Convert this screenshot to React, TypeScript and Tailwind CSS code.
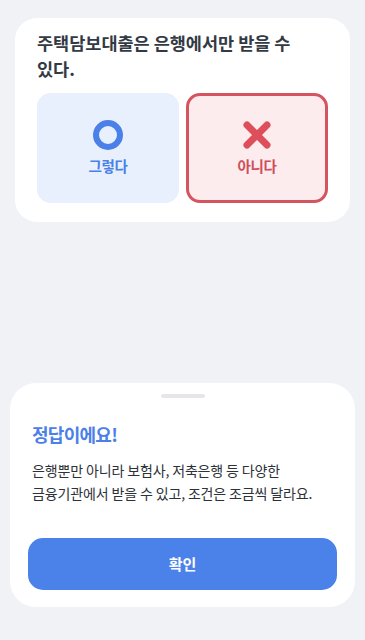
import { useState } from "react";

const font = { fontFamily: '"Noto Sans CJK KR", "Noto Sans", sans-serif' };

function CircleMark() {
  return (
    <svg width="30" height="30" viewBox="0 0 30 30" fill="none">
      <circle cx="15" cy="15" r="12" stroke="#4a80e8" strokeWidth="6" />
    </svg>
  );
}

function CrossMark() {
  return (
    <svg width="30" height="30" viewBox="0 0 30 30" fill="none">
      <path d="M5 5 L25 25 M25 5 L5 25" stroke="#dc4f5b" strokeWidth="7" strokeLinecap="round" />
    </svg>
  );
}

export default function App() {
  const [picked] = useState<"yes" | "no">("no");

  return (
    <div style={font} className="flex h-[640px] flex-col bg-[#f0f2f5] pt-[18px] pb-[33px]">
      {/* quiz card */}
      <div className="mx-[15px] rounded-[22px] bg-white px-[22px] pt-[12px] pb-[19px]">
        <p className="break-keep text-[17.5px] font-bold leading-[26px] text-[#333a44]">
          주택담보대출은 은행에서만 받을 수 있다.
        </p>
        <div className="mt-[11px] grid grid-cols-2 gap-[7px]">
          <button
            className={
              picked === "yes"
                ? "flex h-[110px] flex-col items-center justify-center gap-[6px] rounded-[14px] border-[3px] border-[#4a80e8] bg-[#e8f0fd]"
                : "flex h-[110px] flex-col items-center justify-center gap-[6px] rounded-[14px] bg-[#e8f0fd]"
            }
          >
            <CircleMark />
            <span className="text-[14.5px] font-bold leading-[20px] tracking-[-0.02em] text-[#4a80e8]">그렇다</span>
          </button>
          <button
            className={
              picked === "no"
                ? "flex h-[110px] flex-col items-center justify-center gap-[6px] rounded-[14px] border-[3px] border-[#d4545f] bg-[#fdecee]"
                : "flex h-[110px] flex-col items-center justify-center gap-[6px] rounded-[14px] bg-[#fdecee]"
            }
          >
            <CrossMark />
            <span className="text-[14.5px] font-bold leading-[20px] tracking-[-0.02em] text-[#cf4f5b]">아니다</span>
          </button>
        </div>
      </div>

      {/* result sheet */}
      <div className="mx-[10px] mt-auto rounded-[26px] bg-white px-[18px] pt-[11px] pb-[17px]">
        <div className="mx-auto h-[4px] w-[44px] rounded-full bg-[#e4e6ea]" />
        <h2 className="mt-[24px] px-[4px] text-[18px] font-bold leading-[24px] tracking-[-0.04em] text-[#4a80e8]">
          정답이에요!
        </h2>
        <p className="mt-[13px] break-keep px-[4px] text-[14px] leading-[22.5px] tracking-[-0.01em] text-[#2d3138]">
          은행뿐만 아니라 보험사, 저축은행 등 다양한
          <br />
          금융기관에서 받을 수 있고, 조건은 조금씩 달라요.
        </p>
        <button className="mt-[34px] flex h-[52px] w-full items-center justify-center rounded-[15px] bg-[#4a82ea] text-[15px] font-semibold text-white">
          확인
        </button>
      </div>
    </div>
  );
}
